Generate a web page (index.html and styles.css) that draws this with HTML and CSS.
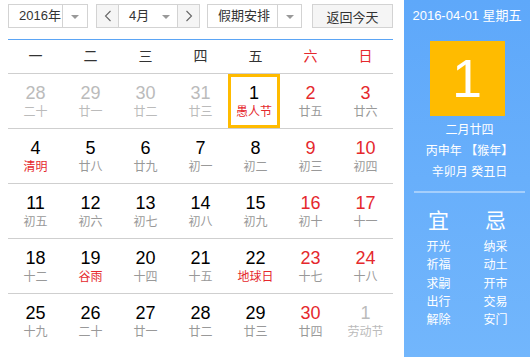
FILE: index.html
```html
<!DOCTYPE html>
<html lang="zh-CN">
  <head>
    <meta charset="UTF-8" />
    <title>万年历</title>
    <link rel="stylesheet" href="styles.css">
  </head>
  <body>
    <div class="calendar">
      <div class="main">
        <div class="toolbar">
          <div class="select year">
            <span class="value">2016年</span>
            <span class="caret"></span>
          </div>
          <div class="select month">
            <span class="nav">
              <svg width="8" height="12" viewBox="0 0 8 12"><polyline points="6.5,1 1.5,6 6.5,11" fill="none" stroke="#666" stroke-width="1.1"/></svg>
            </span>
            <span class="value">4月</span>
            <span class="caret plain"></span>
            <span class="nav">
              <svg width="8" height="12" viewBox="0 0 8 12"><polyline points="1.5,1 6.5,6 1.5,11" fill="none" stroke="#666" stroke-width="1.1"/></svg>
            </span>
          </div>
          <div class="select holiday">
            <span class="value">假期安排</span>
            <span class="caret"></span>
          </div>
          <button class="today-btn">返回今天</button>
        </div>

        <div class="weekdays">
          <span>一</span><span>二</span><span>三</span><span>四</span><span>五</span>
          <span class="red">六</span><span class="red">日</span>
        </div>

        <div class="days" id="days"></div>
      </div>

      <aside class="panel">
        <div class="panel-date">2016-04-01 星期五</div>
        <div class="panel-day">1</div>
        <div class="panel-lunar">
          <p>二月廿四</p>
          <p>丙申年 【猴年】</p>
          <p>辛卯月 癸丑日</p>
        </div>
        <div class="panel-almanac">
          <div class="col">
            <h3>宜</h3>
            <p>开光</p><p>祈福</p><p>求嗣</p><p>出行</p><p>解除</p>
          </div>
          <div class="col">
            <h3>忌</h3>
            <p>纳采</p><p>动土</p><p>开市</p><p>交易</p><p>安门</p>
          </div>
        </div>
      </aside>
    </div>

    <script>
      // [day, lunar, flags] o = other month, h = holiday text, t = today
      const days = [
        [28, "二十", "o"], [29, "廿一", "o"], [30, "廿二", "o"], [31, "廿三", "o"],
        [1, "愚人节", "ht"], [2, "廿五"], [3, "廿六"],
        [4, "清明", "h"], [5, "廿八"], [6, "廿九"], [7, "初一"], [8, "初二"], [9, "初三"], [10, "初四"],
        [11, "初五"], [12, "初六"], [13, "初七"], [14, "初八"], [15, "初九"], [16, "初十"], [17, "十一"],
        [18, "十二"], [19, "谷雨", "h"], [20, "十四"], [21, "十五"], [22, "地球日", "h"], [23, "十七"], [24, "十八"],
        [25, "十九"], [26, "二十"], [27, "廿一"], [28, "廿二"], [29, "廿三"], [30, "廿四"], [1, "劳动节", "o"]
      ];

      const box = document.getElementById("days");
      for (let w = 0; w < 5; w++) {
        const row = document.createElement("div");
        row.className = "week";
        for (let d = 0; d < 7; d++) {
          const [num, lunar, flags = ""] = days[w * 7 + d];
          const cell = document.createElement("div");
          cell.className = "day";
          if (d >= 5) cell.classList.add("weekend");
          if (flags.includes("o")) cell.classList.add("other");
          if (flags.includes("h")) cell.classList.add("festival");
          if (flags.includes("t")) cell.classList.add("today");
          cell.innerHTML = `<span class="num">${num}</span><span class="lunar">${lunar}</span>`;
          row.appendChild(cell);
        }
        box.appendChild(row);
      }
    </script>
  </body>
</html>
```

FILE: styles.css
```css
* {
  box-sizing: border-box;
}

body {
  margin: 0;
  font-family: "Liberation Sans", "Noto Sans CJK SC", sans-serif;
  background: #fff;
  color: #333;
}

.calendar {
  display: flex;
  height: 357px;
  width: 530px;
}

.main {
  width: 404px;
  padding: 0 11px 0 8px;
}

/* ===== toolbar ===== */
.toolbar {
  display: flex;
  height: 40px;
  padding-top: 4px;
  border-bottom: 1px solid #5ba5f5;
}

.select {
  display: flex;
  height: 24px;
  border: 1px solid #d3d3d3;
  font-size: 13px;
  line-height: 22px;
  background: #fff;
}

.select .value {
  padding-left: 10px;
  color: #333;
}

.caret {
  position: relative;
  width: 25px;
  border-left: 1px solid #d3d3d3;
  margin-left: auto;
}

.caret::after {
  content: "";
  position: absolute;
  left: 8px;
  top: 10px;
  border-left: 4px solid transparent;
  border-right: 4px solid transparent;
  border-top: 4px solid #999;
}

.caret.plain {
  border-left: none;
  width: 24px;
}

.caret.plain::after {
  left: 9px;
}

.year {
  width: 80px;
}

.month {
  width: 104px;
  margin-left: 8px;
}

.month .nav {
  width: 22px;
  display: flex;
  align-items: center;
  justify-content: center;
  background: #f5f5f5;
}

.month .nav:first-child {
  border-right: 1px solid #d3d3d3;
}

.month .nav:last-child {
  border-left: 1px solid #d3d3d3;
}

.month .value {
  padding-left: 10px;
}

.holiday {
  width: 95px;
  margin-left: 7px;
}

.holiday .caret {
  width: 24px;
}

.today-btn {
  width: 81px;
  height: 24px;
  margin-left: 10px;
  border: 1px solid #d3d3d3;
  background: #f5f5f5;
  font-family: inherit;
  font-size: 13px;
  color: #333;
  padding: 0;
}

/* ===== grid ===== */
.weekdays {
  display: grid;
  grid-template-columns: repeat(7, 55px);
  height: 33px;
  line-height: 33px;
  text-align: center;
  font-size: 14px;
  color: #333;
}

.red {
  color: #e5282d;
}

.week {
  display: grid;
  grid-template-columns: repeat(7, 55px);
  height: 55px;
  border-top: 1px solid #cfcfcf;
}

.day {
  display: flex;
  flex-direction: column;
  align-items: center;
  padding-top: 8px;
}

.num {
  font-size: 18px;
  line-height: 22px;
  color: #000;
}

.lunar {
  font-size: 12px;
  line-height: 16px;
  color: #999;
}

.weekend .num {
  color: #e5282d;
}

.festival .lunar {
  color: #e5282d;
}

.other .num,
.other .lunar {
  color: #bbb;
}

.day.today {
  border: 3px solid #ffbb00;
  margin-right: 3px;
  padding-top: 5px;
  height: 54px;
}

/* ===== side panel ===== */
.panel {
  width: 126px;
  background: linear-gradient(#5ea8fa, #72b6fc);
  color: #fff;
  text-align: center;
  padding: 6px 6px 0;
}

.panel-date {
  font-size: 13px;
  line-height: 20px;
}

.panel-day {
  width: 75px;
  height: 75px;
  margin: 15px auto 0;
  background: #ffbb00;
  font-size: 54px;
  line-height: 75px;
}

.panel-lunar {
  margin-top: 4px;
  font-size: 12px;
  padding-bottom: 8px;
  border-bottom: 2px solid rgba(255, 255, 255, 0.4);
  margin-left: 4px;
  margin-right: -1px;
}

.panel-lunar p {
  margin: 0;
  line-height: 21px;
}

.panel-almanac {
  display: grid;
  grid-template-columns: 1fr 1fr;
  padding-top: 13px;
}

.panel-almanac h3 {
  margin: 0 0 2px;
  font-size: 21px;
  font-weight: normal;
  line-height: 30px;
}

.panel-almanac p {
  margin: 0;
  font-size: 12px;
  line-height: 18.3px;
}
```
